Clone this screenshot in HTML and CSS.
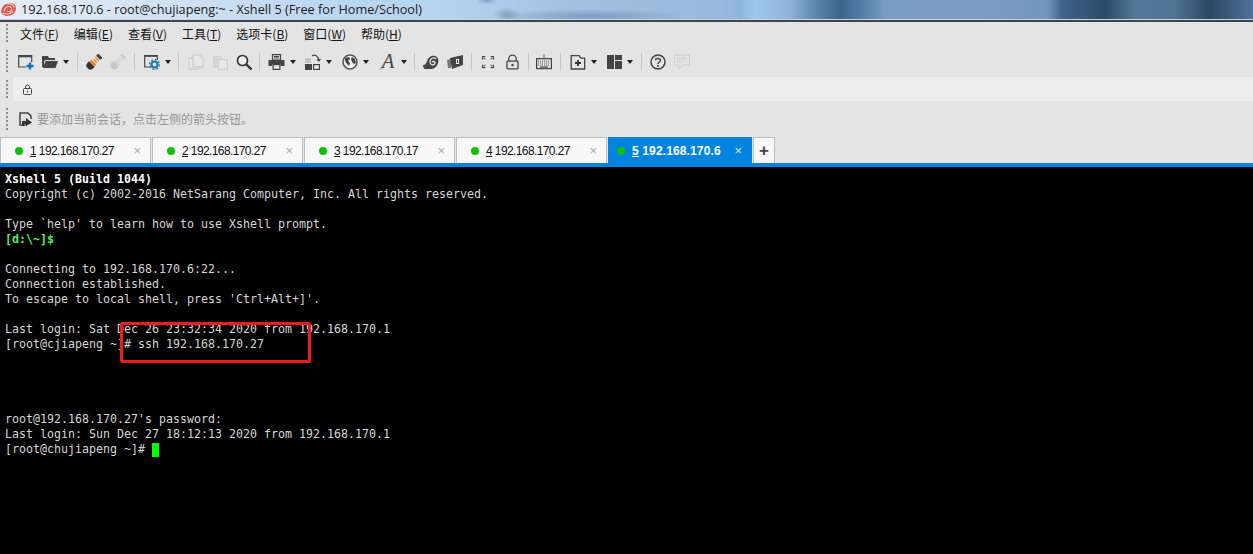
FILE: index.html
```html
<!DOCTYPE html>
<html lang="zh">
<head>
<meta charset="utf-8">
<title>Xshell 5</title>
<link rel="stylesheet" href="styles.css">
</head>
<body>
<div class="app">
  <header class="titlebar">
    <svg class="app-icon" viewBox="0 0 16 16"><path d="M0 10C1 4 5 1 9 1c4 0 7 2 7 6 0 4-4 8-9 8-3 0-6-2-7-5z" fill="#df5a52"/><path d="M3 10c1-4 4-6 7-5 2 1 2 4 0 5-2 1-3 0-3-1M2 12c3 1 8 1 11-2M6 2c4-1 8 1 8 4" fill="none" stroke="#f8cfc8" stroke-width="1.100"/></svg>
    <span class="title-text">192.168.170.6 - root@chujiapeng:~ - Xshell 5 (Free for Home/School)</span>
  </header>

  <nav class="row menubar">
    <i class="grip"></i>
    <span class="menu">文件(<u>F</u>)</span>
    <span class="menu">编辑(<u>E</u>)</span>
    <span class="menu">查看(<u>V</u>)</span>
    <span class="menu">工具(<u>T</u>)</span>
    <span class="menu">选项卡(<u>B</u>)</span>
    <span class="menu">窗口(<u>W</u>)</span>
    <span class="menu">帮助(<u>H</u>)</span>
  </nav>

  <div class="row toolbar">
    <i class="grip"></i>
    <svg class="ic" viewBox="0 0 16 16"><path d="M8 13H.700V1.700h13V8" fill="none" stroke="#444" stroke-width="1.200"/><path d="M1 1.500h13v1.800H1z" fill="#444"/><path d="M8.500 12h7M12 8.500v7" stroke="#0f75b5" stroke-width="2.400"/></svg>
    <svg class="ic" viewBox="0 0 16 16"><path d="M0 2h6l1 2h6v2H4L2 7v6H0z" fill="#444"/><path d="M3.500 7H16l-2.500 7H1z" fill="#444"/></svg>
    <i class="caret"></i>
    <i class="sep"></i>
    <svg class="ic" viewBox="0 0 16 16"><g transform="rotate(-45 8 8)"><path d="M-1 8a4 4 0 0 1 4-4h2v8H3a4 4 0 0 1-4-4z" fill="#333"/><path d="M5 4.500h3v7H5z" fill="#ea8a2c"/><path d="M9 5.500h1.500v5H9zM11.500 5.500H13v5h-1.500z" fill="#ea8a2c"/><path d="M14 5h3v6h-3z" fill="#444"/></g></svg>
    <svg class="ic" viewBox="0 0 16 16"><g transform="rotate(-45 8 8)"><path d="M-1 8a4 4 0 0 1 4-4h2v8H3a4 4 0 0 1-4-4z" fill="#c8c8c8"/><path d="M5 4.500h3v7H5z" fill="#d4d4d4"/><path d="M9 5.500h1.500v5H9zM11.500 5.500H13v5h-1.500z" fill="#d4d4d4"/><path d="M14 5h3v6h-3z" fill="#cfcfcf"/></g></svg>
    <i class="sep"></i>
    <svg class="ic ic-s" viewBox="0 0 16 16"><path d="M6 13H.700V1.700h12.600V6" fill="none" stroke="#444" stroke-width="1.200"/><path d="M1 1h12v1.800H1z" fill="#444"/><circle cx="10.500" cy="10.500" r="3" fill="none" stroke="#1a78b4" stroke-width="2.200"/><circle cx="10.500" cy="10.500" r="5" fill="none" stroke="#1a78b4" stroke-width="1.300" stroke-dasharray="1.800 2.100"/></svg>
    <i class="caret"></i>
    <i class="sep sep-s"></i>
    <svg class="ic ic-m" viewBox="0 0 16 16"><path d="M5 1h7l3 3v9H5zM5 4H1v11h10v-2" fill="#e8e8e8" stroke="#d0d0d0" stroke-width="1.300"/></svg>
    <svg class="ic" viewBox="0 0 16 16"><path d="M1 2h9v3H6v9H1z" fill="#d4d4d4"/><path d="M6.600 5.600h8.800v9.800H6.600z" fill="#e8e8e8" stroke="#d0d0d0" stroke-width="1.200"/></svg>
    <svg class="ic ic-q" viewBox="0 0 16 16"><circle cx="6.500" cy="6.500" r="5" fill="#f3f3f3" stroke="#333" stroke-width="1.700"/><path d="M10.500 10.500l5 5" stroke="#333" stroke-width="2.400"/></svg>
    <i class="sep sep-s"></i>
    <svg class="ic ic-p" viewBox="0 0 16 16"><path d="M4 .700h8V6H4z" fill="none" stroke="#444" stroke-width="1.200"/><path d="M5.500 2.500h5M5.500 4h5" stroke="#444"/><path d="M0 6h16v6H12v-2H4v2H0z" fill="#444"/><path d="M4.600 10.600h6.800v4.800H4.600z" fill="none" stroke="#444" stroke-width="1.200"/></svg>
    <i class="caret"></i>
    <svg class="ic ic-s" viewBox="0 0 16 16"><path d="M0 4h6v5H0z" fill="#c4c4c4"/><path d="M0 10h7v6H0z" fill="#444"/><path d="M8.600 10.600h5.800v4.800H8.600z" fill="#eee" stroke="#444" stroke-width="1.200"/><path d="M7 2c3-2 6 0 7 4M15.500 5l-1.500 2-2-1.500" fill="none" stroke="#444" stroke-width="1.200"/></svg>
    <i class="caret"></i>
    <svg class="ic ic-g" viewBox="0 0 16 16"><circle cx="8" cy="8" r="7" fill="#f2f2f2" stroke="#555" stroke-width="1.600"/><path d="M3 4l4-1 1 2-2 2 2 2-1 3-2-2-2-3zM10 3l3 2 1 4-2 1-2-2-1-3z" fill="#444"/></svg>
    <i class="caret"></i>
    <span class="ic font-ic"><svg class="font-slash" viewBox="0 0 16 16"><path d="M1 16L11 1" stroke="#bbb" stroke-width="2"/></svg><em>A</em></span>
    <i class="caret"></i>
    <i class="sep sep-s"></i>
    <svg class="ic" viewBox="0 0 16 16"><path d="M0 11c2 0 3-1 4-4 1-4 5-6 8-5 3 1 4 4 3 7-1 4-4 6-8 6H2c-1 0-2-2-2-4z" fill="#444"/><path d="M13 5c-2-2-6-1-6 3 0 3 4 4 5 1 0-2-2-2-3-1" fill="none" stroke="#e4e4e4" stroke-width="1.300"/></svg>
    <svg class="ic" viewBox="0 0 16 16"><path d="M0 6l4-1v9l-3 0z" fill="#777"/><path d="M3 4l13-3v10L5 15z" fill="#444"/><path d="M9 5h3v5H9z" fill="#eee"/><path d="M10.500 6v3" stroke="#333"/></svg>
    <i class="sep"></i>
    <svg class="ic ic-f" viewBox="0 0 16 16"><path d="M1 1h4v1.500L2.500 2.500V5H1zM15 1h-4v1.500h2.500V5H15zM1 15h4v-1.500H2.500V11H1zM15 15h-4v-1.500h2.500V11H15z" fill="#555"/><path d="M5 5L3 3M11 5l2-2M5 11l-2 2M11 11l2 2" stroke="#777" stroke-width="1.500"/></svg>
    <svg class="ic ic-l" viewBox="0 0 14 16"><path d="M3 7V4.500a4 4 0 0 1 8 0V7" fill="none" stroke="#444" stroke-width="1.400"/><rect x="1" y="7" width="12" height="8.300" rx="1" fill="none" stroke="#444" stroke-width="1.400"/><path d="M7 10v2.500" stroke="#444" stroke-width="2.200"/></svg>
    <i class="sep sep-k"></i>
    <svg class="ic ic-b" viewBox="0 0 16 16"><path d="M8 0v4" stroke="#666"/><rect x=".600" y="4.600" width="14.800" height="10" fill="none" stroke="#444" stroke-width="1.200"/><path d="M2 7h12M2 9h12M2 11h12" stroke="#555" stroke-dasharray="1 1"/><path d="M4 13h8" stroke="#444" stroke-width="1.200"/></svg>
    <i class="sep"></i>
    <svg class="ic ic-nt" viewBox="0 0 15 16"><path d="M.700 1.700h8l1.500 2.500h4V15H.700z" fill="none" stroke="#444" stroke-width="1.300"/><path d="M4.500 9h6M7.500 6v6" stroke="#333" stroke-width="1.800"/></svg>
    <i class="caret"></i>
    <svg class="ic ic-n" viewBox="0 0 15 16"><path d="M0 1h7v14H0zM8 1h7v5H8zM8 7h7v8H8z" fill="#444"/></svg>
    <i class="caret"></i>
    <i class="sep"></i>
    <svg class="ic" viewBox="0 0 16 16"><circle cx="8" cy="8" r="7" fill="none" stroke="#444" stroke-width="1.500"/><path d="M5.500 6.200C5.700 3.800 10.500 3.800 10.500 6.200 10.500 8 8 8 8 10" fill="none" stroke="#444" stroke-width="1.500"/><path d="M8 11v1.800" stroke="#444" stroke-width="1.600"/></svg>
    <svg class="ic" viewBox="0 0 16 16"><path d="M2 1h12a1.500 1.500 0 0 1 1.500 1.500v7A1.500 1.500 0 0 1 14 11H8l-3 4v-4H2A1.500 1.500 0 0 1 .500 9.500v-7A1.500 1.500 0 0 1 2 1z" fill="none" stroke="#ccc"/><path d="M3 4h10M3 6h10M3 8h6" stroke="#d0d0d0"/></svg>
  </div>

  <div class="row addressrow">
    <i class="grip"></i>
    <div class="address">
      <svg class="lock" viewBox="0 0 9 11"><path d="M2.500 4.500V3a2 2 0 0 1 4 0v1.500" fill="none" stroke="#444"/><rect x=".500" y="4.500" width="8" height="6" rx="1" fill="none" stroke="#444"/><path d="M4.500 6.500v2" stroke="#444"/></svg>
    </div>
  </div>

  <div class="row hintrow">
    <i class="grip"></i>
    <svg class="hint-ic" viewBox="0 0 14 14"><path d="M7 13H1V1h8l3 3v3" fill="none" stroke="#444" stroke-width="1.500"/><path d="M3 14V9h4V6l6 4.500L7 14v-2H5v2z" fill="#333"/></svg>
    <span class="hint">要添加当前会话，点击左侧的箭头按钮。</span>
  </div>

  <div class="tabs">
    <div class="tab"><i class="dot"></i><span class="tab-label"><u>1</u> 192.168.170.27</span><span class="close">×</span></div>
    <div class="tab"><i class="dot"></i><span class="tab-label"><u>2</u> 192.168.170.27</span><span class="close">×</span></div>
    <div class="tab"><i class="dot"></i><span class="tab-label"><u>3</u> 192.168.170.17</span><span class="close">×</span></div>
    <div class="tab"><i class="dot"></i><span class="tab-label"><u>4</u> 192.168.170.27</span><span class="close">×</span></div>
    <div class="tab active"><i class="dot"></i><span class="tab-label"><u>5</u> 192.168.170.6</span><span class="close">×</span></div>
    <div class="tab-add">+</div>
  </div>
  <div class="accent"></div>

  <main class="terminal">
<pre class="screen"><b>Xshell 5 (Build 1044)</b>
Copyright (c) 2002-2016 NetSarang Computer, Inc. All rights reserved.

Type `help' to learn how to use Xshell prompt.
<b class="prompt">[d:\~]$</b>

Connecting to 192.168.170.6:22...
Connection established.
To escape to local shell, press 'Ctrl+Alt+]'.

Last login: Sat Dec 26 23:32:34 2020 from 192.168.170.1
[root@cjiapeng ~]# ssh 192.168.170.27




root@192.168.170.27's password:
Last login: Sun Dec 27 18:12:13 2020 from 192.168.170.1
[root@chujiapeng ~]# <span class="cursor"> </span></pre>
    <div class="redbox"></div>
  </main>
</div>
</body>
</html>
```
FILE: styles.css
```css
* { box-sizing: border-box; }
html, body { margin: 0; height: 100%; overflow: hidden; background: #000; }
.app { display: flex; flex-direction: column; height: 554px; background: #e4e4e4; font-family: "Noto Sans CJK SC", sans-serif; }

.titlebar {
  height: 22px; display: flex; align-items: center; gap: 5px; padding: 0 0 2px 1px;
  border-bottom: 2px solid #3c4650; box-shadow: inset 0 -1px 0 #c8d4e0;
  background:
    radial-gradient(ellipse 95px 7px at 590px 16px, rgba(70,100,140,.4), transparent),
    radial-gradient(ellipse 14px 8px at 507px 15px, rgba(70,90,120,.35), transparent),
    radial-gradient(ellipse 10px 5px at 487px 0, rgba(80,110,150,.5), transparent),
    linear-gradient(90deg, #e6edf5 0, #d3e2f2 150px, #bcd7f2 330px, #b5d2f0 450px, #a3c2e2 560px, #99b9da 720px, #8fb4dc 740px, #a0c6ec 755px, #90b4d8 790px, #5e87ad 815px, #3f6488 840px, #4f7ca6 860px, #7a9dc4 885px, #7b9cc2 1000px, #7195ba 1048px, #3f6487 1062px, #2c4a69 1105px, #547898 1135px, #4f7393 1175px, #2c4763 1210px, #4f7396 1253px);
}
.app-icon { width: 15px; height: 15px; flex: none; }
.title-text { font: 12.7px "Open Sans", sans-serif; color: #1c1c1c; white-space: nowrap; }

.row { display: flex; align-items: center; flex: none; }
.grip {
  width: 2px; flex: none; align-self: center; margin-left: 6px;
  background: repeating-linear-gradient(#8a8a8a 0 2px, transparent 2px 4px);
}
.menubar { height: 23px; font-size: 12px; color: #111; }
.menubar .grip { height: 19px; margin-right: 12px; }
.menu { margin-right: 15px; white-space: nowrap; }
.menu u { text-underline-offset: 1px; }

.toolbar { height: 32px; gap: 8px; padding-top: 1px; }
.toolbar .grip { height: 23px; margin-right: 2px; }
.ic { width: 16px; height: 16px; flex: none; display: block; }
.ic-s { margin-left: 1px; }
.ic-m { margin-left: 1px; }
.ic-p { width: 17px; }
.ic-g { margin-left: 2px; }
.ic-f { width: 14px; height: 14px; margin-left: 1px; margin-right: 3px; }
.ic-l { width: 13px; }
.ic-b { margin-left: -1px; }
.ic-nt { margin-left: 1px; }
.ic-n { width: 15px; margin-left: 2px; }
.caret { width: 0; height: 0; margin-left: -3px; border: 3px solid transparent; border-top: 4px solid #222; border-bottom: 0; flex: none; }
.sep { width: 1px; height: 18px; background: #c6c6c6; flex: none; }
.sep-s { margin-left: -1px; }
.sep-k { margin-left: 1px; }
.font-ic { position: relative; width: 17px; margin-left: 2px; }
.font-slash { position: absolute; left: 0; top: 0; width: 16px; height: 16px; }
.font-ic em { position: absolute; left: 3px; top: -4px; font: italic 20px/22px "Liberation Serif", serif; color: #444; }

.addressrow { height: 24px; }
.addressrow .grip { height: 18px; margin-right: 5px; }
.address { flex: 1; height: 24px; background: #eee; display: flex; align-items: center; padding-left: 10px; }
.lock { width: 9px; height: 11px; }

.hintrow { height: 36px; }
.hintrow .grip { height: 23px; margin-right: 11px; }
.hint-ic { width: 14px; height: 14px; margin-right: 4px; }
.hint { font-size: 12px; color: #989898; white-space: nowrap; margin-bottom: 2px; }

.tabs { height: 26px; flex: none; display: flex; gap: 1px; font-family: "Liberation Sans", sans-serif; font-size: 12px; }
.tab {
  width: 151px; height: 26px; display: flex; align-items: center; padding: 0 9px 0 14px;
  background: #f8f8f8; border: 1px solid #bdbdbd; border-bottom: 0; color: #111;
}
.dot { width: 8px; height: 8px; border-radius: 50%; background: #0fc00f; flex: none; margin-right: 7px; }
.tab-label { flex: 1; white-space: nowrap; letter-spacing: -.6px; }
.close { color: #aaa; font-size: 13px; }
.tab.active { width: 144px; padding: 0 9px 0 8px; background: #0084df; border-color: #0084df; color: #fff; }
.tab.active .tab-label { font-weight: 700; letter-spacing: .13px; }
.tab.active .close { color: #d8ecfa; }
.tab-add { width: 22px; height: 26px; background: #f8f8f8; border: 1px solid #bdbdbd; border-bottom: 0; display: flex; align-items: center; justify-content: center; font-size: 17px; font-weight: 700; color: #444; }
.accent { height: 4px; flex: none; background: #0084df; }

.terminal { position: relative; flex: 1; background: #000; overflow: hidden; }
.screen { margin: 0; padding: 5px 0 0 5px; font: 11.63px/15px "DejaVu Sans Mono", monospace; color: #d6d6d6; }
.screen b { color: #fff; }
.screen .prompt { color: #55f055; }
.cursor { display: inline-block; width: 7px; height: 14px; background: #00ff00; vertical-align: -1px; }
.redbox { position: absolute; left: 120px; top: 155px; width: 191px; height: 41px; border: 3px solid #f01c1c; border-radius: 3px; }
```
